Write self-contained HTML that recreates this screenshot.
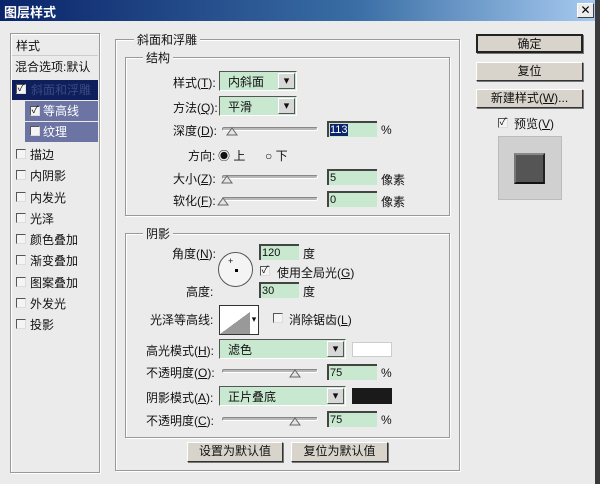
<!DOCTYPE html>
<html><head><meta charset="utf-8"><style>
*{margin:0;padding:0;box-sizing:border-box}
body{width:600px;height:484px;background:#ebebeb;position:relative;overflow:hidden;font-family:"Liberation Sans","Noto Sans CJK SC",sans-serif;font-size:12px;color:#111}
.a{position:absolute;white-space:nowrap}
.title{left:0;top:0;width:595px;height:21px;background:linear-gradient(90deg,#0a246a,#3a6ea5 60%,#a6caf0);color:#fff;font-weight:bold;font-size:13px;padding:2px 4px}
.close{left:577px;top:3px;width:17px;height:15px;background:#ececec;border:1px solid;border-color:#fff #404040 #404040 #fff;text-align:center;font-size:12px;line-height:12px;color:#000}
.edge{left:595px;top:0;width:5px;height:484px;background:#3a3a3a}
.box{position:absolute;border:1px solid #999;box-shadow:1px 1px 0 #fff inset,1px 1px 0 #fff}
.lbl{position:absolute;background:#ebebeb;padding:0 3px;font-size:12px}
.cb{position:absolute;width:10px;height:10px;background:#f4f4f4;border:1px solid;border-color:#555 #ddd #ddd #555;font-size:10px;line-height:8px;text-align:center}
.sel{position:absolute;background:#c8e8d0;border:1px solid;border-color:#555 #fff #fff #555;padding:1px 8px;font-size:12px}
.sel::after{content:"▾";position:absolute;right:1px;top:1px;width:15px;bottom:1px;background:#d8d8d8;border:1px solid;border-color:#fff #555 #555 #fff;font-size:11px;text-align:center;line-height:14px}
.inp{position:absolute;background:#c8e8d0;border-top:2px solid #444;border-left:2px solid #444;height:16px;padding-left:1px;font-size:11px;line-height:14px}
.sl{position:absolute;height:4px;background:#b8b8b8;border:1px solid;border-color:#888 #fff #fff #888;border-radius:2px}
.th{position:absolute;width:12px;height:9px}
.btn{position:absolute;background:#d8d4cc;border:1px solid;border-color:#fff #333 #333 #fff;box-shadow:1px 1px 0 #777;text-align:center;font-size:12px;line-height:16px}
.li{position:absolute;left:12px;width:86px;height:20px;padding-left:18px;line-height:20px}
</style></head><body>
<div class="a title">图层样式</div>
<div class="a close">✕</div>
<div class="a edge"></div>

<div class="box" style="left:10px;top:33px;width:90px;height:440px;background:#ebebeb"></div>
<div class="a" style="left:16px;top:37px">样式</div>
<div class="a" style="left:12px;top:55px;width:86px;height:1px;background:#ccc"></div>
<div class="a" style="left:15px;top:58px">混合选项:默认</div>
<div class="li" style="top:80px;background:#0f1f5c"></div>
<div class="cb" style="left:16px;top:84px">✓</div>
<div class="a" style="left:31px;top:81px;color:#3a4a80">斜面和浮雕</div>
<div class="li" style="left:25px;width:73px;top:101px;background:#6b74a2;padding-left:18px;color:#fff">等高线</div>
<div class="cb" style="left:30px;top:106px">✓</div>
<div class="li" style="left:25px;width:73px;top:122px;background:#6b74a2;padding-left:18px;color:#fff">纹理</div>
<div class="cb" style="left:30px;top:126px"></div>
<div class="li" style="top:145px">描边</div><div class="cb" style="left:16px;top:149px"></div>
<div class="li" style="top:166px">内阴影</div><div class="cb" style="left:16px;top:170px"></div>
<div class="li" style="top:188px">内发光</div><div class="cb" style="left:16px;top:192px"></div>
<div class="li" style="top:209px">光泽</div><div class="cb" style="left:16px;top:213px"></div>
<div class="li" style="top:230px">颜色叠加</div><div class="cb" style="left:16px;top:234px"></div>
<div class="li" style="top:251px">渐变叠加</div><div class="cb" style="left:16px;top:255px"></div>
<div class="li" style="top:273px">图案叠加</div><div class="cb" style="left:16px;top:277px"></div>
<div class="li" style="top:294px">外发光</div><div class="cb" style="left:16px;top:298px"></div>
<div class="li" style="top:315px">投影</div><div class="cb" style="left:16px;top:319px"></div>

<div class="box" style="left:115px;top:39px;width:345px;height:432px"></div>
<div class="lbl" style="left:134px;top:31px">斜面和浮雕</div>
<div class="box" style="left:125px;top:57px;width:325px;height:159px"></div>
<div class="lbl" style="left:143px;top:49px">结构</div>

<div class="a" style="left:173px;top:74px">样式(<u>T</u>):</div>
<div class="sel" style="left:219px;top:71px;width:78px;height:20px">内斜面</div>
<div class="a" style="left:173px;top:99px">方法(<u>Q</u>):</div>
<div class="sel" style="left:219px;top:96px;width:78px;height:20px">平滑</div>
<div class="a" style="left:173px;top:122px">深度(<u>D</u>):</div>
<div class="sl" style="left:222px;top:127px;width:96px"></div><svg class="th" style="left:226px;top:127px" viewBox="0 0 12 9"><path d="M6 1L11 8H1Z" fill="#e4e4e4" stroke="#666"/></svg>
<div class="inp" style="left:327px;top:121px;width:50px"><span style="background:#0a246a;color:#fff">113</span></div>
<div class="a" style="left:381px;top:123px">%</div>
<div class="a" style="left:188px;top:147px">方向:</div>
<div class="a" style="left:218px;top:147px">◉ 上</div>
<div class="a" style="left:265px;top:147px">○ 下</div>
<div class="a" style="left:173px;top:170px">大小(<u>Z</u>):</div>
<div class="sl" style="left:222px;top:175px;width:96px"></div><svg class="th" style="left:221px;top:175px" viewBox="0 0 12 9"><path d="M6 1L11 8H1Z" fill="#e4e4e4" stroke="#666"/></svg>
<div class="inp" style="left:327px;top:169px;width:50px">5</div>
<div class="a" style="left:381px;top:171px">像素</div>
<div class="a" style="left:173px;top:192px">软化(<u>F</u>):</div>
<div class="sl" style="left:222px;top:197px;width:96px"></div><svg class="th" style="left:217px;top:197px" viewBox="0 0 12 9"><path d="M6 1L11 8H1Z" fill="#e4e4e4" stroke="#666"/></svg>
<div class="inp" style="left:327px;top:191px;width:50px">0</div>
<div class="a" style="left:381px;top:193px">像素</div>

<div class="box" style="left:125px;top:233px;width:325px;height:205px"></div>
<div class="lbl" style="left:143px;top:225px">阴影</div>
<div class="a" style="left:172px;top:245px">角度(<u>N</u>):</div>
<div class="a" style="left:218px;top:252px;width:35px;height:35px;border-radius:50%;border:1px solid #555;background:#f4f4f4"></div>
<div class="a" style="left:235px;top:269px;width:3px;height:3px;background:#000"></div>
<div class="a" style="left:228px;top:256px;font-size:9px">+</div>
<div class="inp" style="left:259px;top:244px;width:40px">120</div>
<div class="a" style="left:303px;top:245px">度</div>
<div class="cb" style="left:260px;top:266px">✓</div>
<div class="a" style="left:277px;top:264px">使用全局光(<u>G</u>)</div>
<div class="a" style="left:186px;top:283px">高度:</div>
<div class="inp" style="left:259px;top:282px;width:40px">30</div>
<div class="a" style="left:303px;top:283px">度</div>
<div class="a" style="left:150px;top:311px">光泽等高线:</div>
<div class="a" style="left:219px;top:305px;width:40px;height:30px;border:1px solid #333;background:linear-gradient(to top left,#999 50%,#fff 50%)"></div>
<div class="a" style="left:250px;top:306px;width:8px;height:28px;background:#fff;font-size:9px;line-height:26px;text-align:center">▾</div>
<div class="cb" style="left:273px;top:313px"></div>
<div class="a" style="left:289px;top:311px">消除锯齿(<u>L</u>)</div>
<div class="a" style="left:146px;top:342px">高光模式(<u>H</u>):</div>
<div class="sel" style="left:219px;top:339px;width:127px;height:20px">滤色</div>
<div class="a" style="left:352px;top:342px;width:40px;height:15px;background:#fff;border:1px solid #ccc"></div>
<div class="a" style="left:146px;top:364px">不透明度(<u>O</u>):</div>
<div class="sl" style="left:222px;top:369px;width:96px"></div><svg class="th" style="left:289px;top:369px" viewBox="0 0 12 9"><path d="M6 1L11 8H1Z" fill="#e4e4e4" stroke="#666"/></svg>
<div class="inp" style="left:327px;top:364px;width:50px">75</div>
<div class="a" style="left:381px;top:366px">%</div>
<div class="a" style="left:146px;top:389px">阴影模式(<u>A</u>):</div>
<div class="sel" style="left:219px;top:386px;width:127px;height:20px">正片叠底</div>
<div class="a" style="left:352px;top:388px;width:40px;height:16px;background:#1a1a1a"></div>
<div class="a" style="left:146px;top:412px">不透明度(<u>C</u>):</div>
<div class="sl" style="left:222px;top:417px;width:96px"></div><svg class="th" style="left:289px;top:417px" viewBox="0 0 12 9"><path d="M6 1L11 8H1Z" fill="#e4e4e4" stroke="#666"/></svg>
<div class="inp" style="left:327px;top:411px;width:50px">75</div>
<div class="a" style="left:381px;top:413px">%</div>
<div class="btn" style="left:187px;top:442px;width:96px;height:20px">设置为默认值</div>
<div class="btn" style="left:291px;top:442px;width:97px;height:20px">复位为默认值</div>

<div class="btn" style="left:476px;top:34px;width:107px;height:19px;border:2px solid #222">确定</div>
<div class="btn" style="left:476px;top:62px;width:107px;height:19px">复位</div>
<div class="btn" style="left:476px;top:89px;width:107px;height:19px">新建样式(<u>W</u>)...</div>
<div class="cb" style="left:498px;top:118px">✓</div>
<div class="a" style="left:514px;top:115px">预览(<u>V</u>)</div>
<div class="a" style="left:498px;top:136px;width:64px;height:64px;background:#d0d0d0;border:1px solid #bbb"></div>
<div class="a" style="left:514px;top:153px;width:31px;height:31px;background:#555;border:2px solid;border-color:#888 #222 #111 #777"></div>
</body></html>
